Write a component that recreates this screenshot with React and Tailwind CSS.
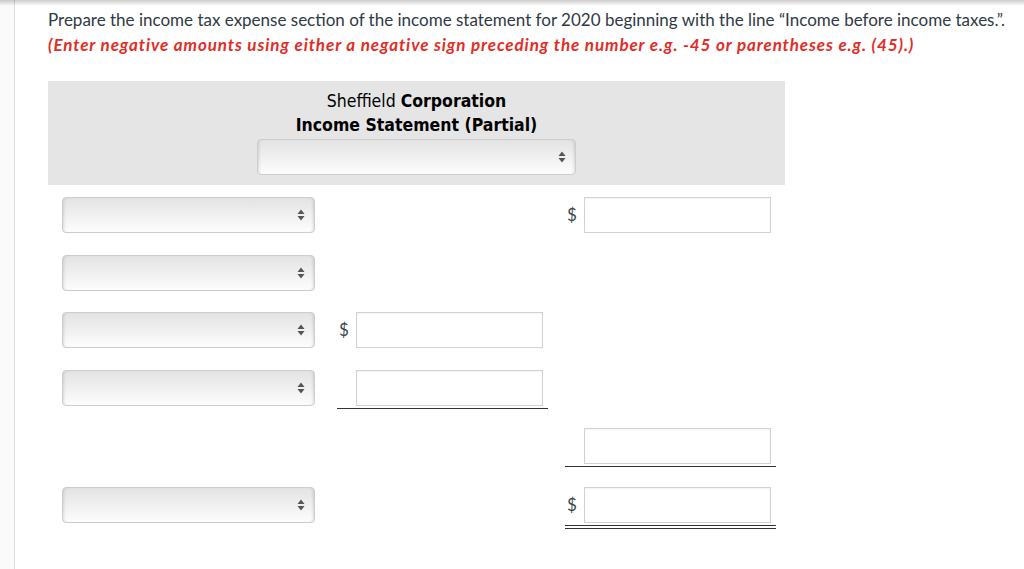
import React from "react";

// up/down arrow pair drawn on the right edge of each select
function Arrows() {
  return (
    <svg
      width="8"
      height="12"
      viewBox="0 0 8 12"
      className="pointer-events-none absolute right-[10px] top-1/2 -translate-y-1/2"
    >
      <path d="M4 0.5 L7.5 5 L0.5 5 Z" fill="#555" />
      <path d="M0.5 7 L7.5 7 L4 11.5 Z" fill="#555" />
    </svg>
  );
}

function Select({ width = "w-[253px]" }) {
  return (
    <div className={`relative ${width} h-[36px]`}>
      <select
        defaultValue=""
        className="h-full w-full appearance-none rounded-[4px] border border-[#cdcdcd] bg-gradient-to-b from-[#e3e3e3] to-[#fdfdfd] shadow-[inset_3px_0_3px_-2px_rgba(0,0,0,0.12),inset_-3px_0_3px_-2px_rgba(0,0,0,0.12)] outline-none"
      >
        <option value=""></option>
      </select>
      <Arrows />
    </div>
  );
}

function Amount({ dollar = false, line = "none" }) {
  const lineCls =
    line === "single"
      ? "border-b border-[#333] pb-[2px]"
      : line === "double"
      ? "border-b-4 border-double border-[#333] pb-[2px]"
      : "pb-[3px]";
  return (
    <div className={`flex w-[211px] items-center pr-[5px] ${lineCls}`}>
      <span className="w-[19px] pl-[2px] text-[17px] text-[#3a4550]">
        {dollar ? "$" : ""}
      </span>
      <input
        type="text"
        className="h-[36px] w-[187px] border border-[#d2d2d2] bg-white shadow-[inset_0_1px_2px_rgba(0,0,0,0.05)] outline-none"
      />
    </div>
  );
}

function Row({ select, col2, col3, h = "h-[58px]" }) {
  return (
    <div className={`flex ${h} items-start pl-[14px]`}>
      <div className="w-[253px]">{select && <Select />}</div>
      <div className="ml-[22px] w-[211px]">{col2}</div>
      <div className="ml-[17px] w-[211px]">{col3}</div>
    </div>
  );
}

export default function App() {
  const headFont = { fontFamily: "'DejaVu Sans Condensed', 'DejaVu Sans', sans-serif" };
  return (
    <div
      className="relative flex min-h-[569px] bg-white"
      style={{ fontFamily: "Lato, 'Open Sans', sans-serif" }}
    >
      {/* top shade */}
      <div className="pointer-events-none absolute left-0 right-0 top-0 h-[6px] bg-gradient-to-b from-black/20 to-transparent" />

      {/* left strip */}
      <div className="w-[15px] shrink-0 border-r border-[#dedede] bg-[#fafafa]" />

      <main className="flex-1 pl-[33px] pt-[8px]">
        <p className="whitespace-nowrap text-[17px] leading-[24px] text-[#2e3a45]">
          Prepare the income tax expense section of the income statement for 2020 beginning with the line “Income before income taxes.”.
        </p>
        <p className="mt-[1px] whitespace-nowrap text-[17px] font-bold italic leading-[24px] tracking-[0.9px] text-[#e22d26]">
          (Enter negative amounts using either a negative sign preceding the number e.g. -45 or parentheses e.g. (45).)
        </p>

        <section className="mt-[24px] w-[737px]">
          <div className="flex h-[104px] flex-col items-center bg-[#e5e5e5] pt-[8px]">
            <div className="text-[17.5px] leading-[24px] text-black" style={headFont}>
              Sheffield <span className="font-bold">Corporation</span>
            </div>
            <div className="text-[17.5px] font-bold leading-[24px] text-black" style={headFont}>
              Income Statement (Partial)
            </div>
            <div className="mt-[2px]">
              <Select width="w-[319px]" />
            </div>
          </div>

          <div className="pt-[12px]">
            <Row select col3={<Amount dollar />} />
            <Row select h="h-[57px]" />
            <Row select col2={<Amount dollar />} />
            <Row select col2={<Amount line="single" />} />
            <Row col3={<Amount line="single" />} h="h-[59px]" />
            <Row select col3={<Amount dollar line="double" />} />
          </div>
        </section>
      </main>
    </div>
  );
}
